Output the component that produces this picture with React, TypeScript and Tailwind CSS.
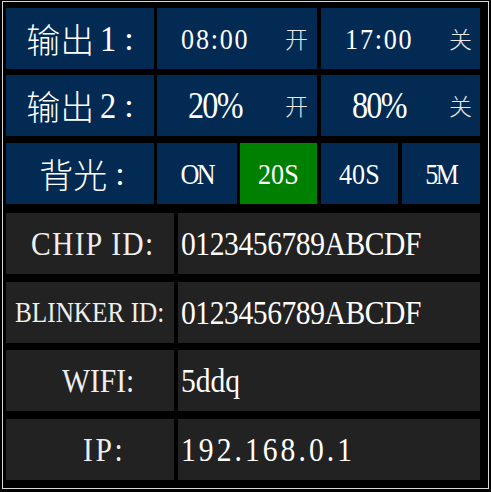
import React from "react";

const F = { fontFamily: '"Liberation Serif", "Noto Sans CJK SC", serif' };
const CJK = { fontFamily: '"Noto Sans CJK SC", sans-serif' };

const BLUE = "bg-[#022a52]";
const GRAY = "bg-[#222222]";

function OutCell({ main, tag, mainSize }: { main: string; tag: string; mainSize: string }) {
  return (
    <div className={`${BLUE} h-full flex items-center text-white`}>
      <div className="w-[116px] flex justify-center leading-none">
        <span className={`inline-block scale-x-[0.87] origin-center ${mainSize}`}>{main}</span>
      </div>
      <div className="ml-[12px] text-[23px] leading-none font-light text-[#e8e8e8]" style={CJK}>
        {tag}
      </div>
    </div>
  );
}

function InfoRow({ label, value, labelCls, valueCls, mt }: { label: string; value: string; labelCls: string; valueCls: string; mt: string }) {
  return (
    <div className={`flex h-[61px] ${mt}`}>
      <div className={`${GRAY} w-[168px] flex items-center text-[#eeeeee] leading-none overflow-hidden`}>
        <span className={`inline-block whitespace-nowrap scale-x-[0.87] origin-left ${labelCls}`}>{label}</span>
      </div>
      <div className={`${GRAY} w-[302px] ml-[4px] flex items-center text-white leading-none pl-[3px]`}>
        <span className={`inline-block whitespace-nowrap scale-x-[0.87] origin-left ${valueCls}`}>{value}</span>
      </div>
    </div>
  );
}

function Label({ cjk, tail }: { cjk: string; tail: string }) {
  return (
    <div className={`${BLUE} w-[148px] flex items-center justify-center text-white text-[34px] leading-none`}>
      <span className="font-light" style={CJK}>{cjk}</span>
      {tail && <span className="ml-[5px] inline-block scale-x-[0.9] text-[36px]">{tail}</span>}
      <span className="ml-[7px]">:</span>
    </div>
  );
}

export default function App() {
  return (
    <div className="w-[491px] h-[492px] bg-black pt-[1px] pl-[2px]" style={F}>
      <div className="w-[487px] h-[488px] border border-[#d8d8d8] pt-[6px] pl-[3px]">
        {/* Row 1 */}
        <div className="flex h-[61px]">
          <Label cjk="输出" tail="1" />
          <div className="w-[160px] ml-[3px]">
            <OutCell main="08:00" tag="开" mainSize="text-[30px] tracking-[2px]" />
          </div>
          <div className="w-[159px] ml-[4px]">
            <OutCell main="17:00" tag="关" mainSize="text-[30px] tracking-[2px]" />
          </div>
        </div>
        {/* Row 2 */}
        <div className="flex h-[61px] mt-[6px]">
          <Label cjk="输出" tail="2" />
          <div className="w-[160px] ml-[3px]">
            <OutCell main="20%" tag="开" mainSize="text-[37px] tracking-[-2px]" />
          </div>
          <div className="w-[159px] ml-[4px]">
            <OutCell main="80%" tag="关" mainSize="text-[37px] tracking-[-2px]" />
          </div>
        </div>
        {/* Row 3 */}
        <div className="flex h-[61px] mt-[7px] text-white text-[30px] leading-none">
          <div className={`${BLUE} w-[148px] flex items-center justify-center text-[34px]`}>
            <span className="ml-[4px] font-light" style={CJK}>背光</span>
            <span className="ml-[8px]">:</span>
          </div>
          <div className={`${BLUE} w-[80px] ml-[3px] flex items-center justify-center`}>
            <span className="inline-block scale-x-[0.87] tracking-[-3px]">ON</span>
          </div>
          <div className="bg-[#008000] w-[77px] ml-[3px] flex items-center justify-center">
            <span className="inline-block scale-x-[0.87]">20S</span>
          </div>
          <div className={`${BLUE} w-[77px] ml-[4px] flex items-center justify-center`}>
            <span className="inline-block scale-x-[0.87]">40S</span>
          </div>
          <div className={`${BLUE} w-[78px] ml-[4px] flex items-center justify-center`}>
            <span className="inline-block scale-x-[0.87] tracking-[-3px]">5M</span>
          </div>
        </div>
        <InfoRow mt="mt-[9px]" label="CHIP ID:" value="0123456789ABCDF" labelCls="ml-[25px] text-[34px] tracking-[1.5px]" valueCls="text-[34px] tracking-[-0.5px]" />
        <InfoRow mt="mt-[8px]" label="BLINKER ID:" value="0123456789ABCDF" labelCls="ml-[9px] text-[29px]" valueCls="text-[34px] tracking-[-0.5px]" />
        <InfoRow mt="mt-[7px]" label="WIFI:" value="5ddq" labelCls="ml-[56px] text-[34px]" valueCls="text-[34px]" />
        <InfoRow mt="mt-[8px]" label="IP:" value="192.168.0.1" labelCls="ml-[77px] text-[34px] tracking-[3px]" valueCls="text-[34px] tracking-[3.5px]" />
      </div>
    </div>
  );
}
